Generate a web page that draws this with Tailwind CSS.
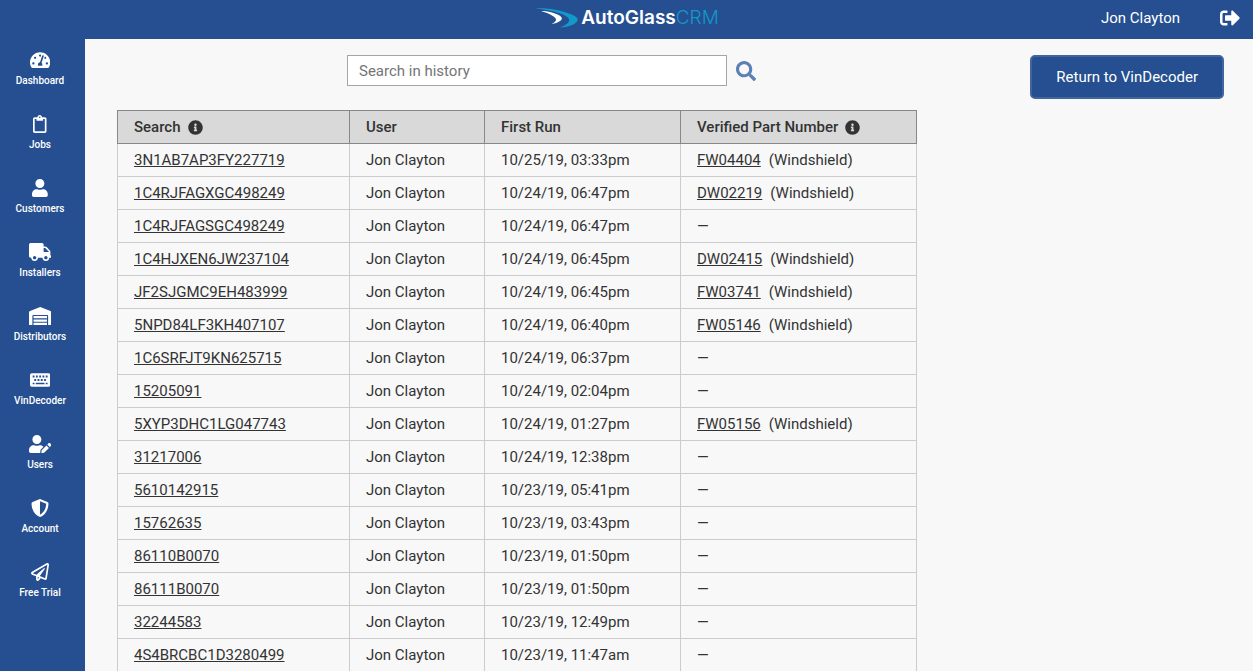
<!DOCTYPE html>
<html lang="en">
<head>
<meta charset="utf-8">
<meta name="viewport" content="width=device-width, initial-scale=1">
<title>AutoGlassCRM - VinDecoder History</title>
<script src="https://cdn.jsdelivr.net/npm/@tailwindcss/browser@4"></script>
</head>
<body class="flex h-screen flex-col overflow-hidden bg-[#f8f8f8] font-[Roboto,sans-serif] text-[15px] leading-5 text-[#333]">
<header class="grid h-[39px] shrink-0 grid-cols-[1fr_auto_1fr] items-center bg-[#254f90] pb-[3px] text-white">
  <span></span>
  <a href="#" aria-label="AutoGlassCRM" class="flex items-center gap-[3px]">
    <svg class="h-5 w-11" viewBox="0 0 44 20" aria-hidden="true">
      <path fill="#1398cb" d="M1 .5C12-.5 26 2 35 5.500c7 2.500 10 5 8 8-2 3-9 5.800-17 6 7-2.500 10-5.500 9-8.500C33.500 6.500 18 2 1 .5Z"/>
      <path fill="#fff" d="M7 3c7 0 14 2 18.500 4.500 3 2 3 4 .5 5.500-2 1.500-5 2.500-8.500 3 3.500-1.800 5.500-3.800 4-5.800C19.500 7.500 13 4.500 7 3Z"/>
    </svg>
    <span class="flex font-[Inter,sans-serif] text-[19px] leading-6"><span class="font-semibold">AutoGlass</span><span class="font-light text-[#1398cb]">CRM</span></span>
  </a>
  <div class="flex items-center justify-end gap-10 pr-[13px]">
    <span>Jon Clayton</span>
    <button type="button" aria-label="Sign out"><svg class="size-5" viewBox="0 0 512 512" fill="currentColor"><path d="M497 273L329 441c-15 15-41 4.500-41-17v-96H152c-13.300 0-24-10.700-24-24v-96c0-13.300 10.700-24 24-24h136V88c0-21.400 25.900-32 41-17l168 168c9.300 9.400 9.300 24.600 0 34zM192 436v-40c0-6.600-5.400-12-12-12H96c-17.700 0-32-14.300-32-32V160c0-17.700 14.300-32 32-32h84c6.600 0 12-5.400 12-12V76c0-6.600-5.400-12-12-12H96c-53 0-96 43-96 96v192c0 53 43 96 96 96h84c6.600 0 12-5.400 12-12z"/></svg></button>
  </div>
</header>
<div class="flex min-h-0 flex-1">
  <nav aria-label="Main" class="flex w-[85px] shrink-0 flex-col bg-[#254f90] pt-3 pr-[5px] text-[10px] leading-4 font-medium text-white">
    <a href="#" class="flex h-16 flex-col items-center gap-1"><svg class="h-[18px]" viewBox="0 0 576 512" fill="currentColor"><path d="M288 32C128.940 32 0 160.940 0 320c0 52.800 14.250 102.260 39.060 144.800 5.610 9.620 16.300 15.200 27.440 15.200h443c11.140 0 21.830-5.580 27.440-15.200C561.750 422.260 576 372.800 576 320c0-159.060-128.940-288-288-288zm0 64c14.710 0 26.580 10.130 30.320 23.650-1.110 2.260-2.640 4.230-3.450 6.670l-9.220 27.670c-5.130 3.490-10.970 6.010-17.640 6.010-17.670 0-32-14.330-32-32S270.330 96 288 96zM96 384c-17.670 0-32-14.330-32-32s14.330-32 32-32 32 14.330 32 32-14.330 32-32 32zm48-160c-17.670 0-32-14.330-32-32s14.330-32 32-32 32 14.330 32 32-14.330 32-32 32zm246.770-72.410l-61.330 184C343.130 347.330 352 364.540 352 384c0 11.720-3.380 22.550-8.880 32H232.880c-5.500-9.450-8.880-20.280-8.880-32 0-33.940 26.500-61.430 59.900-63.590l61.340-184.010c4.170-12.560 17.730-19.450 30.360-15.170 12.570 4.190 19.350 17.790 15.170 30.360zm14.660 57.200l15.520-46.550c3.470-1.290 7.130-2.230 11.050-2.230 17.670 0 32 14.330 32 32s-14.330 32-32 32c-11.380-.01-20.890-6.280-26.570-15.220zM480 384c-17.670 0-32-14.330-32-32s14.330-32 32-32 32 14.330 32 32-14.330 32-32 32z"/></svg>Dashboard</a>
    <a href="#" class="flex h-16 flex-col items-center gap-1"><svg class="h-[18px]" viewBox="0 0 384 512" fill="currentColor"><path d="M336 64h-80c0-35.300-28.700-64-64-64s-64 28.700-64 64H48C21.500 64 0 85.500 0 112v352c0 26.500 21.500 48 48 48h288c26.500 0 48-21.500 48-48V112c0-26.500-21.500-48-48-48zM192 40c13.300 0 24 10.700 24 24s-10.700 24-24 24-24-10.700-24-24 10.700-24 24-24zm144 418c0 3.300-2.700 6-6 6H54c-3.300 0-6-2.700-6-6V118c0-3.300 2.700-6 6-6h42v36c0 6.600 5.400 12 12 12h168c6.600 0 12-5.400 12-12v-36h42c3.300 0 6 2.700 6 6z"/></svg>Jobs</a>
    <a href="#" class="flex h-16 flex-col items-center gap-1"><svg class="h-[18px]" viewBox="0 0 448 512" fill="currentColor"><path d="M224 256c70.700 0 128-57.300 128-128S294.700 0 224 0 96 57.300 96 128s57.300 128 128 128zm89.600 32h-16.700c-22.200 10.200-46.900 16-72.900 16s-50.600-5.800-72.900-16h-16.700C60.200 288 0 348.200 0 422.400V464c0 26.500 21.500 48 48 48h352c26.500 0 48-21.500 48-48v-41.600c0-74.200-60.200-134.400-134.400-134.400z"/></svg>Customers</a>
    <a href="#" class="flex h-16 flex-col items-center gap-1"><svg class="h-[18px]" viewBox="0 0 640 512" fill="currentColor"><path d="M624 352h-16V243.900c0-12.700-5.100-24.900-14.100-33.900L494 110.100c-9-9-21.200-14.100-33.900-14.100H416V48c0-26.500-21.500-48-48-48H48C21.500 0 0 21.500 0 48v320c0 26.500 21.500 48 48 48h16c0 53 43 96 96 96s96-43 96-96h128c0 53 43 96 96 96s96-43 96-96h48c8.800 0 16-7.200 16-16v-32c0-8.800-7.200-16-16-16zM160 464c-26.500 0-48-21.500-48-48s21.500-48 48-48 48 21.500 48 48-21.500 48-48 48zm320 0c-26.500 0-48-21.500-48-48s21.500-48 48-48 48 21.500 48 48-21.500 48-48 48zm80-208H416V144h44.100l99.900 99.900V256z"/></svg>Installers</a>
    <a href="#" class="flex h-16 flex-col items-center gap-1"><svg class="h-[18px]" viewBox="0 0 640 512" fill="currentColor"><path d="M504 352H136.400c-4.400 0-8 3.600-8 8l-.1 48c0 4.400 3.600 8 8 8H504c4.400 0 8-3.600 8-8v-48c0-4.400-3.600-8-8-8zm0 96H136.100c-4.400 0-8 3.600-8 8l-.1 48c0 4.400 3.600 8 8 8h368c4.400 0 8-3.600 8-8v-48c0-4.400-3.600-8-8-8zm0-192H136.600c-4.400 0-8 3.600-8 8l-.1 48c0 4.400 3.600 8 8 8H504c4.400 0 8-3.600 8-8v-48c0-4.400-3.600-8-8-8zm106.500-139L338.400 3.700a48.150 48.150 0 0 0-36.900 0L29.500 117C11.700 124.500 0 141.900 0 161.300V504c0 4.400 3.600 8 8 8h80c4.400 0 8-3.600 8-8V256c0-17.600 14.600-32 32.600-32h382.800c18 0 32.600 14.400 32.600 32v248c0 4.400 3.600 8 8 8h80c4.400 0 8-3.600 8-8V161.300c0-19.400-11.700-36.800-29.500-44.300z"/></svg>Distributors</a>
    <a href="#" class="flex h-16 flex-col items-center gap-1"><svg class="h-[18px]" viewBox="0 0 576 512" fill="currentColor" fill-rule="evenodd"><path d="M48 64h480a48 48 0 0 1 48 48v288a48 48 0 0 1-48 48H48a48 48 0 0 1-48-48V112a48 48 0 0 1 48-48ZM76 130v52h52v-52ZM169 130v52h52v-52ZM262 130v52h52v-52ZM355 130v52h52v-52ZM448 130v52h52v-52ZM122 230v52h52v-52ZM215 230v52h52v-52ZM308 230v52h52v-52ZM401 230v52h52v-52ZM76 336v40h52v-40ZM164 336v40h248v-40ZM448 336v40h52v-40Z"/></svg>VinDecoder</a>
    <a href="#" class="flex h-16 flex-col items-center gap-1"><svg class="h-[18px]" viewBox="0 0 640 512" fill="currentColor"><path d="M224 256c70.700 0 128-57.300 128-128S294.700 0 224 0 96 57.300 96 128s57.300 128 128 128zm89.600 32h-16.700c-22.200 10.200-46.900 16-72.900 16s-50.600-5.800-72.900-16h-16.700C60.200 288 0 348.200 0 422.400V464c0 26.500 21.500 48 48 48h274.900c-2.400-6.800-3.400-14-2.600-21.300l6.800-60.900 1.200-11.100 7.900-7.900 77.300-77.300c-24.500-27.700-60-45.500-99.900-45.500zm45.300 145.300l-6.800 61c-1.100 10.200 7.500 18.800 17.600 17.600l60.900-6.800 137.900-137.900-71.700-71.700-137.900 137.800zM633 268.900L595.100 231c-9.300-9.300-24.500-9.300-33.800 0l-37.800 37.800-4.100 4.100 71.800 71.700 41.800-41.800c9.300-9.400 9.300-24.500 0-33.900z"/></svg>Users</a>
    <a href="#" class="flex h-16 flex-col items-center gap-1"><svg class="h-[18px]" viewBox="0 0 512 512" fill="currentColor"><path d="M466.500 83.700l-192-80a48.150 48.150 0 0 0-36.900 0l-192 80C27.700 91.100 16 108.600 16 128c0 198.500 114.500 335.700 221.500 380.300 11.800 4.900 25.100 4.900 36.900 0C360.100 472.600 496 349.300 496 128c0-19.400-11.700-36.900-29.500-44.300zM256.100 446.300l-.1-381 175.900 73.300c-3.300 151.400-82.100 261.100-175.800 307.700z"/></svg>Account</a>
    <a href="#" class="flex h-16 flex-col items-center gap-1"><svg class="h-[18px]" viewBox="0 0 512 512" fill="currentColor"><path d="M440 6.500L24 246.400c-34.400 19.900-31.100 70.800 5.700 85.900L144 379.600V464c0 46.400 59.200 65.500 86.600 28.600l43.800-59.100 111.900 46.200c5.900 2.400 12.100 3.600 18.300 3.600 8.200 0 16.300-2.100 23.600-6.200 12.800-7.200 21.600-20 23.900-34.500l59.400-387.200c6.100-40.100-36.900-68.800-71.500-48.900zM192 464v-64.600l36.600 15.100L192 464zm212.600-28.700l-153.800-63.500L391 169.500c10.700-15.500-9.500-33.500-23.700-21.200L155.800 332.600 48 288 464 48l-59.400 387.300z"/></svg>Free Trial</a>
  </nav>
  <main class="min-w-0 flex-1 overflow-y-auto pt-4 pr-[29px] pl-8 [scrollbar-width:none]">
    <div class="flex h-[55px] items-start justify-between">
      <form role="search" class="flex items-center gap-[9px] pl-[230px]">
        <input type="search" aria-label="Search in history" placeholder="Search in history" class="h-[31px] w-[380px] border border-[#a5a5a5] bg-white px-[11px] outline-none placeholder:text-[#757575]">
        <button type="button" aria-label="Search" class="text-[#5b80b5]"><svg class="size-5" viewBox="0 0 512 512" fill="currentColor"><path d="M505 442.700L405.300 343c-4.500-4.500-10.600-7-17-7H372c27.600-35.300 44-79.700 44-128C416 93.100 322.900 0 208 0S0 93.100 0 208s93.100 208 208 208c48.300 0 92.700-16.400 128-44v16.300c0 6.400 2.500 12.500 7 17l99.700 99.700c9.400 9.400 24.600 9.400 33.900 0l28.300-28.300c9.400-9.400 9.400-24.600.1-34zM208 336c-70.700 0-128-57.200-128-128 0-70.700 57.200-128 128-128 70.700 0 128 57.200 128 128 0 70.700-57.200 128-128 128z"/></svg></button>
      </form>
      <button type="button" class="h-11 rounded-[5px] border-2 border-[#41659d] bg-[#254f90] px-6 text-white">Return to VinDecoder</button>
    </div>
    <table class="w-[800px] table-fixed border-collapse text-left">
      <colgroup><col class="w-[232px]"><col class="w-[135px]"><col class="w-[196px]"><col></colgroup>
      <thead class="bg-[#d9d9d9] [&_th]:h-[33px] [&_th]:border [&_th]:border-[#888] [&_th]:px-4 [&_th]:py-0 [&_th]:font-medium">
        <tr>
          <th scope="col"><span class="flex items-center gap-[7px]">Search <svg class="size-[15px]" viewBox="0 0 512 512" fill="currentColor"><path id="info" d="M256 8C119.043 8 8 119.083 8 256c0 136.997 111.043 248 248 248s248-111.003 248-248C504 119.083 392.957 8 256 8zm0 110c23.196 0 42 18.804 42 42s-18.804 42-42 42-42-18.804-42-42 18.804-42 42-42zm56 254c0 6.627-5.373 12-12 12h-88c-6.627 0-12-5.373-12-12v-24c0-6.627 5.373-12 12-12h12v-64h-12c-6.627 0-12-5.373-12-12v-24c0-6.627 5.373-12 12-12h64c6.627 0 12 5.373 12 12v100h12c6.627 0 12 5.373 12 12v24z"/></svg></span></th>
          <th scope="col">User</th>
          <th scope="col">First Run</th>
          <th scope="col"><span class="flex items-center gap-[7px]">Verified Part Number <svg class="size-[15px]" viewBox="0 0 512 512" fill="currentColor"><use href="#info"/></svg></span></th>
        </tr>
      </thead>
      <tbody class="[&_a]:underline [&_a]:decoration-1 [&_a]:underline-offset-1 [&_a]:[text-decoration-skip-ink:none] [&_td]:h-[33px] [&_td]:border [&_td]:border-[#ccc] [&_td]:px-4 [&_td]:py-0">
        <tr><td><a href="#">3N1AB7AP3FY227719</a></td><td>Jon Clayton</td><td>10/25/19, 03:33pm</td><td><a href="#">FW04404</a><span class="pl-2">(Windshield)</span></td></tr>
        <tr><td><a href="#">1C4RJFAGXGC498249</a></td><td>Jon Clayton</td><td>10/24/19, 06:47pm</td><td><a href="#">DW02219</a><span class="pl-2">(Windshield)</span></td></tr>
        <tr><td><a href="#">1C4RJFAGSGC498249</a></td><td>Jon Clayton</td><td>10/24/19, 06:47pm</td><td>—</td></tr>
        <tr><td><a href="#">1C4HJXEN6JW237104</a></td><td>Jon Clayton</td><td>10/24/19, 06:45pm</td><td><a href="#">DW02415</a><span class="pl-2">(Windshield)</span></td></tr>
        <tr><td><a href="#">JF2SJGMC9EH483999</a></td><td>Jon Clayton</td><td>10/24/19, 06:45pm</td><td><a href="#">FW03741</a><span class="pl-2">(Windshield)</span></td></tr>
        <tr><td><a href="#">5NPD84LF3KH407107</a></td><td>Jon Clayton</td><td>10/24/19, 06:40pm</td><td><a href="#">FW05146</a><span class="pl-2">(Windshield)</span></td></tr>
        <tr><td><a href="#">1C6SRFJT9KN625715</a></td><td>Jon Clayton</td><td>10/24/19, 06:37pm</td><td>—</td></tr>
        <tr><td><a href="#">15205091</a></td><td>Jon Clayton</td><td>10/24/19, 02:04pm</td><td>—</td></tr>
        <tr><td><a href="#">5XYP3DHC1LG047743</a></td><td>Jon Clayton</td><td>10/24/19, 01:27pm</td><td><a href="#">FW05156</a><span class="pl-2">(Windshield)</span></td></tr>
        <tr><td><a href="#">31217006</a></td><td>Jon Clayton</td><td>10/24/19, 12:38pm</td><td>—</td></tr>
        <tr><td><a href="#">5610142915</a></td><td>Jon Clayton</td><td>10/23/19, 05:41pm</td><td>—</td></tr>
        <tr><td><a href="#">15762635</a></td><td>Jon Clayton</td><td>10/23/19, 03:43pm</td><td>—</td></tr>
        <tr><td><a href="#">86110B0070</a></td><td>Jon Clayton</td><td>10/23/19, 01:50pm</td><td>—</td></tr>
        <tr><td><a href="#">86111B0070</a></td><td>Jon Clayton</td><td>10/23/19, 01:50pm</td><td>—</td></tr>
        <tr><td><a href="#">32244583</a></td><td>Jon Clayton</td><td>10/23/19, 12:49pm</td><td>—</td></tr>
        <tr><td><a href="#">4S4BRCBC1D3280499</a></td><td>Jon Clayton</td><td>10/23/19, 11:47am</td><td>—</td></tr>
      </tbody>
    </table>
  </main>
</div>
</body>
</html>
